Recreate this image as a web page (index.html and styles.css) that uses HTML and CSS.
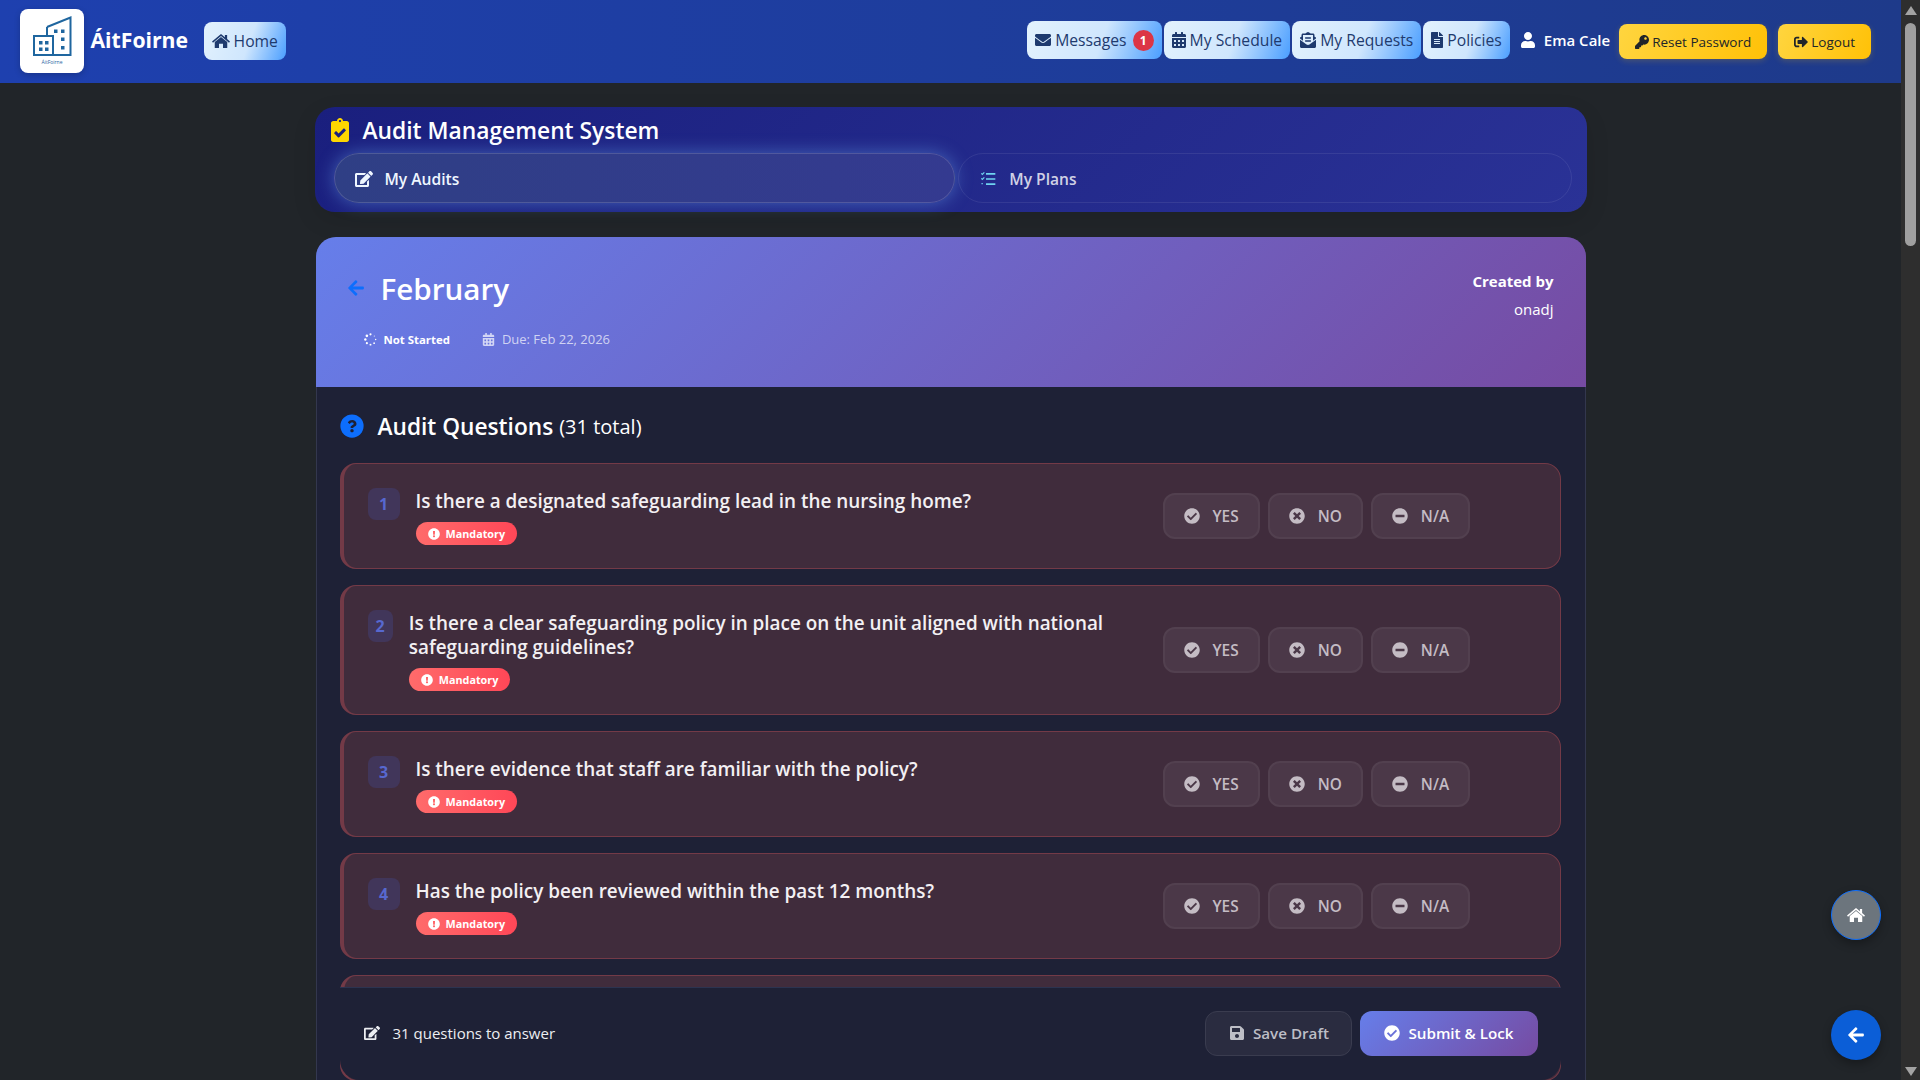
FILE: index.html
```html
<!DOCTYPE html>
<html lang="en">
<head>
    <meta charset="UTF-8">
    <meta name="viewport" content="width=device-width, initial-scale=1.0">
    <title>Audit Management System</title>
    <link rel="stylesheet" href="styles.css">
</head>
<body>

    <!-- Icon sprites -->
    <svg class="icon-defs" xmlns="http://www.w3.org/2000/svg">
        <symbol id="i-home" viewBox="0 0 576 512"><path d="M288 32L412 134V60h72v134l92 76-32 38L288 96 32 308 0 270zM288 124l200 166v178c0 7-5 12-12 12H352V340H224v140H100c-7 0-12-5-12-12V290z"/></symbol>
        <symbol id="i-envelope" viewBox="0 0 512 512"><path d="M502.3 190.8c3.9-3.1 9.7-.2 9.7 4.7V400c0 26.5-21.5 48-48 48H48c-26.5 0-48-21.5-48-48V195.6c0-5 5.7-7.8 9.7-4.7 22.4 17.4 52.1 39.5 154.1 113.6 21.1 15.4 56.7 47.8 92.2 47.6 35.7.3 72-32.8 92.3-47.6 102-74.1 131.6-96.3 154-113.7zM256 320c23.2.4 56.6-29.2 73.4-41.4 132.7-96.3 142.8-104.7 173.4-128.7 5.8-4.5 9.2-11.5 9.2-18.9v-19c0-26.5-21.5-48-48-48H48C21.5 64 0 85.5 0 112v19c0 7.4 3.4 14.3 9.2 18.9 30.6 23.9 40.7 32.4 173.4 128.7 16.8 12.2 50.2 41.8 73.4 41.4z"/></symbol>
        <symbol id="i-calendar" viewBox="0 0 448 512"><path d="M0 464c0 26.5 21.5 48 48 48h352c26.5 0 48-21.5 48-48V192H0v272zm320-196c0-6.6 5.4-12 12-12h40c6.6 0 12 5.4 12 12v40c0 6.6-5.4 12-12 12h-40c-6.6 0-12-5.4-12-12v-40zm0 128c0-6.6 5.4-12 12-12h40c6.6 0 12 5.4 12 12v40c0 6.6-5.4 12-12 12h-40c-6.6 0-12-5.4-12-12v-40zM192 268c0-6.6 5.4-12 12-12h40c6.6 0 12 5.4 12 12v40c0 6.6-5.4 12-12 12h-40c-6.6 0-12-5.4-12-12v-40zm0 128c0-6.6 5.4-12 12-12h40c6.6 0 12 5.4 12 12v40c0 6.6-5.4 12-12 12h-40c-6.6 0-12-5.4-12-12v-40zM64 268c0-6.6 5.4-12 12-12h40c6.6 0 12 5.4 12 12v40c0 6.6-5.4 12-12 12H76c-6.6 0-12-5.4-12-12v-40zm0 128c0-6.6 5.4-12 12-12h40c6.6 0 12 5.4 12 12v40c0 6.6-5.4 12-12 12H76c-6.6 0-12-5.4-12-12v-40zM400 64h-48V16c0-8.8-7.2-16-16-16h-32c-8.8 0-16 7.2-16 16v48H160V16c0-8.8-7.2-16-16-16h-32c-8.8 0-16 7.2-16 16v48H48C21.5 64 0 85.5 0 112v48h448v-48c0-26.5-21.5-48-48-48z"/></symbol>
        <symbol id="i-envelope-text" viewBox="0 0 512 512"><path d="M176 216h160c8.8 0 16-7.2 16-16v-16c0-8.800-7.200-16-16-16H176c-8.800 0-16 7.200-16 16v16c0 8.800 7.200 16 16 16zm-16 80c0 8.800 7.200 16 16 16h160c8.800 0 16-7.200 16-16v-16c0-8.800-7.200-16-16-16H176c-8.800 0-16 7.200-16 16v16zm96 121c-16.400 0-32.900-5.100-46.900-15.200L0 250v214c0 26.500 21.500 48 48 48h416c26.500 0 48-21.500 48-48V250L302.900 401.800c-14 10.100-30.500 15.200-46.900 15.200zm237.600-254.200c-8.900-6.900-17.300-13.400-29.600-22.700V96c0-26.500-21.500-48-48-48h-77.600c-3-2.200-5.900-4.300-9-6.600C312.600 29.200 279.200-.3 256 0c-23.200-.3-56.600 29.200-73.400 41.400-3.100 2.300-6 4.400-9 6.600H96c-26.500 0-48 21.500-48 48v44.100c-12.300 9.300-20.700 15.800-29.600 22.700A48 48 0 0 0 0 200.700v10.600l96 69.300V96h320v184.600l96-69.300v-10.600c0-14.800-6.800-28.800-18.400-37.900z"/></symbol>
        <symbol id="i-file" viewBox="0 0 384 512"><path d="M224 136V0H24C10.700 0 0 10.700 0 24v464c0 13.300 10.700 24 24 24h336c13.300 0 24-10.700 24-24V160H248c-13.200 0-24-10.800-24-24zm64 236c0 6.600-5.400 12-12 12H108c-6.600 0-12-5.400-12-12v-8c0-6.600 5.400-12 12-12h168c6.600 0 12 5.400 12 12v8zm0-64c0 6.600-5.400 12-12 12H108c-6.600 0-12-5.400-12-12v-8c0-6.600 5.400-12 12-12h168c6.600 0 12 5.400 12 12v8zm0-72v8c0 6.600-5.400 12-12 12H108c-6.600 0-12-5.400-12-12v-8c0-6.600 5.400-12 12-12h168c6.600 0 12 5.400 12 12zm96-114.100v6.100H256V0h6.100c6.400 0 12.500 2.500 17 7l97.900 98c4.500 4.500 7 10.600 7 16.900z"/></symbol>
        <symbol id="i-user" viewBox="0 0 448 512"><path d="M224 256c70.700 0 128-57.300 128-128S294.700 0 224 0 96 57.300 96 128s57.300 128 128 128zm89.600 32h-16.700c-22.200 10.200-46.900 16-72.900 16s-50.600-5.800-72.900-16h-16.700C60.200 288 0 348.200 0 422.400V464c0 26.500 21.500 48 48 48h352c26.500 0 48-21.500 48-48v-41.600c0-74.200-60.200-134.400-134.400-134.400z"/></symbol>
        <symbol id="i-key" viewBox="0 0 512 512"><path d="M512 176.001C512 273.203 433.202 352 336 352c-11.220 0-22.190-1.062-32.827-3.069l-24.012 27.014A23.999 23.999 0 0 1 261.223 384H224v40c0 13.255-10.745 24-24 24h-40v40c0 13.255-10.745 24-24 24H24c-13.255 0-24-10.745-24-24v-78.059c0-6.365 2.529-12.470 7.029-16.971l161.802-161.802C163.108 213.814 160 195.271 160 176 160 78.798 238.797.001 335.999 0 433.488-.001 512 78.511 512 176.001zM336 128c0 26.510 21.490 48 48 48s48-21.490 48-48-21.490-48-48-48-48 21.490-48 48z"/></symbol>
        <symbol id="i-logout" viewBox="0 0 512 512"><path d="M497 273L329 441c-15 15-41 4.500-41-17v-96H152c-13.300 0-24-10.700-24-24v-96c0-13.300 10.700-24 24-24h136V88c0-21.400 25.900-32 41-17l168 168c9.300 9.400 9.300 24.600 0 34zM192 436v-40c0-6.600-5.400-12-12-12H96c-17.700 0-32-14.300-32-32V160c0-17.700 14.300-32 32-32h84c6.600 0 12-5.400 12-12V76c0-6.600-5.400-12-12-12H96c-53 0-96 43-96 96v192c0 53 43 96 96 96h84c6.600 0 12-5.400 12-12z"/></symbol>
        <symbol id="i-edit" viewBox="0 0 576 512"><path d="M402.600 83.200l90.200 90.200c3.800 3.800 3.800 10 0 13.800L274.400 405.600l-92.800 10.300c-12.400 1.400-22.900-9.100-21.500-21.500l10.300-92.800L388.800 83.200c3.800-3.800 10-3.800 13.800 0zm162-22.900l-48.800-48.800c-15.200-15.200-39.900-15.200-55.200 0l-35.400 35.400c-3.800 3.800-3.800 10 0 13.800l90.200 90.200c3.800 3.800 10 3.800 13.800 0l35.400-35.400c15.200-15.300 15.200-40 0-55.200zM384 346.200V448H64V128h229.800c3.200 0 6.200-1.300 8.500-3.500l40-40c7.600-7.600 2.200-20.500-8.500-20.500H48C21.500 64 0 85.500 0 112v352c0 26.500 21.500 48 48 48h352c26.500 0 48-21.500 48-48V306.200c0-10.700-12.900-16-20.500-8.500l-40 40c-2.200 2.300-3.500 5.300-3.500 8.500z"/></symbol>
        <symbol id="i-save" viewBox="0 0 448 512"><path d="M433.941 129.941l-83.882-83.882A48 48 0 0 0 316.118 32H48C21.490 32 0 53.490 0 80v352c0 26.510 21.490 48 48 48h352c26.510 0 48-21.490 48-48V163.882a48 48 0 0 0-14.059-33.941zM224 416c-35.346 0-64-28.654-64-64 0-35.346 28.654-64 64-64s64 28.654 64 64c0 35.346-28.654 64-64 64zm96-304.520V212c0 6.627-5.373 12-12 12H76c-6.627 0-12-5.373-12-12V108c0-6.627 5.373-12 12-12h228.520c3.183 0 6.235 1.264 8.485 3.515l3.480 3.480A11.996 11.996 0 0 1 320 111.480z"/></symbol>
        <symbol id="i-check" viewBox="0 0 512 512"><path d="M504 256c0 136.967-111.033 248-248 248S8 392.967 8 256 119.033 8 256 8s248 111.033 248 248zM227.314 387.314l184-184c6.248-6.248 6.248-16.379 0-22.627l-22.627-22.627c-6.248-6.249-16.379-6.249-22.628 0L216 308.118l-70.059-70.059c-6.248-6.248-16.379-6.248-22.628 0l-22.627 22.627c-6.248 6.248-6.248 16.379 0 22.627l104 104c6.249 6.249 16.379 6.249 22.628.001z"/></symbol>
        <symbol id="i-times" viewBox="0 0 512 512"><path d="M256 8C119 8 8 119 8 256s111 248 248 248 248-111 248-248S393 8 256 8zm121.600 313.100c4.700 4.700 4.700 12.300 0 17L338 377.600c-4.700 4.700-12.300 4.700-17 0L256 312l-65.100 65.600c-4.700 4.700-12.300 4.700-17 0L134.400 338c-4.700-4.700-4.700-12.300 0-17l65.600-65-65.600-65.100c-4.700-4.700-4.700-12.300 0-17l39.600-39.600c4.700-4.700 12.300-4.700 17 0l65 65.700 65.100-65.600c4.700-4.700 12.300-4.700 17 0l39.600 39.600c4.700 4.700 4.700 12.300 0 17L312 256l65.600 65.100z"/></symbol>
        <symbol id="i-minus" viewBox="0 0 512 512"><path d="M256 8C119 8 8 119 8 256s111 248 248 248 248-111 248-248S393 8 256 8zM124 296c-6.600 0-12-5.400-12-12v-56c0-6.600 5.400-12 12-12h264c6.600 0 12 5.400 12 12v56c0 6.600-5.400 12-12 12H124z"/></symbol>
        <symbol id="i-alert" viewBox="0 0 512 512"><path d="M504 256c0 136.997-111.043 248-248 248S8 392.997 8 256C8 119.083 119.043 8 256 8s248 111.083 248 248zm-248 50c-25.405 0-46 20.595-46 46s20.595 46 46 46 46-20.595 46-46-20.595-46-46-46zm-43.673-165.346l7.418 136c.347 6.364 5.609 11.346 11.982 11.346h48.546c6.373 0 11.635-4.982 11.982-11.346l7.418-136c.375-6.874-5.098-12.654-11.982-12.654h-63.383c-6.884 0-12.356 5.780-11.981 12.654z"/></symbol>
        <symbol id="i-question" viewBox="0 0 512 512"><circle cx="256" cy="256" r="248"/><path transform="translate(256 256) scale(.78) translate(-256 -256)" fill="#1e2136" d="M262.655 90c-54.497 0-89.255 22.957-116.549 63.758-3.536 5.286-2.353 12.415 2.715 16.258l34.699 26.310c5.205 3.947 12.621 3.008 16.665-2.122 17.864-22.658 30.113-35.797 57.303-35.797 20.429 0 45.698 13.148 45.698 32.958 0 14.976-12.363 22.667-32.534 33.976C247.128 238.528 216 254.941 216 296v4c0 6.627 5.373 12 12 12h56c6.627 0 12-5.373 12-12v-1.333c0-28.462 83.186-29.647 83.186-106.667 0-58.002-60.165-102-116.531-102zM256 338c-25.365 0-46 20.635-46 46 0 25.364 20.635 46 46 46s46-20.636 46-46c0-25.365-20.635-46-46-46z"/></symbol>
        <symbol id="i-arrow" viewBox="0 0 448 512"><path d="M257.500 445.100l-22.200 22.200c-9.400 9.400-24.600 9.400-33.900 0L7 273c-9.400-9.400-9.400-24.600 0-33.900L201.400 44.700c9.400-9.400 24.600-9.400 33.900 0l22.200 22.200c9.500 9.500 9.300 25-.4 34.300L136.600 216H424c13.300 0 24 10.700 24 24v32c0 13.300-10.700 24-24 24H136.600l120.500 114.800c9.800 9.300 10 24.800.4 34.300z"/></symbol>
        <symbol id="i-clipboard" viewBox="0 0 384 512"><path d="M336 64h-80c0-35.300-28.700-64-64-64s-64 28.700-64 64H48C21.500 64 0 85.500 0 112v352c0 26.500 21.500 48 48 48h288c26.500 0 48-21.500 48-48V112c0-26.500-21.500-48-48-48zM192 40c13.300 0 24 10.700 24 24s-10.700 24-24 24-24-10.700-24-24 10.700-24 24-24zm121.200 231.800l-143 141.800c-4.700 4.700-12.300 4.600-17-.1l-82.600-83.300c-4.700-4.700-4.600-12.300.1-17L99.100 285c4.700-4.700 12.300-4.600 17 .1l46 46.400 106-105.100c4.700-4.700 12.300-4.600 17 .1l28.200 28.400c4.700 4.800 4.600 12.300-.1 16.900z"/></symbol>
        <symbol id="i-tasks" viewBox="0 0 24 24"><path d="M2 3.500l1.500 1.500L6.500 2M2 11l1.500 1.500 3-3M2.200 19h2" fill="none" stroke="currentColor" stroke-width="1.800"/><path d="M9 3h14v2.500H9zM9 10.700h14v2.500H9zM9 18.400h14v2.500H9z"/></symbol>
        <symbol id="i-spinner" viewBox="0 0 24 24"><circle cx="12" cy="2.500" r="2"/><circle cx="19" cy="5.500" r="1"/><circle cx="21.500" cy="12" r="1.300"/><circle cx="18.700" cy="18.700" r="1.600"/><circle cx="12" cy="21.500" r="1.800"/><circle cx="5.300" cy="18.700" r="2"/><circle cx="2.500" cy="12" r="2.200"/><circle cx="5.300" cy="5.300" r="2.400"/></symbol>
    </svg>

    <div class="page">
        <nav class="navbar">
            <div class="brand">
                <div class="brand-logo">
                    <svg class="brand-mark" viewBox="0 0 40 40">
                        <path d="M14 11L37.500 1.500V39H20" fill="none" stroke="#1f669f" stroke-width="2"/>
                        <rect x="1" y="20" width="19" height="19" fill="#fff" stroke="#1f669f" stroke-width="2"/>
                        <path d="M14 20v-9" stroke="#1f669f" stroke-width="2"/>
                        <path d="M6 25h3.500v3.500H6zM12 25h3.500v3.500H12zM6 31.500h3.500V35H6zM12 31.500h3.500V35H12zM21 13.500h3.500V17H21zM28 13.500h3.500V17H28zM28 21.500h3.500V25H28zM28 30h3.500v3.500H28z" fill="#1f669f"/>
                    </svg>
                    <span class="brand-tiny">ÁitFoirne</span>
                </div>
                <span class="brand-name">ÁitFoirne</span>
                <a class="nav-btn nav-home" href="#"><svg class="icon"><use href="#i-home"/></svg>Home</a>
            </div>
            <div class="nav-right">
                <a class="nav-btn" href="#"><svg class="icon"><use href="#i-envelope"/></svg>Messages<span class="msg-badge">1</span></a>
                <a class="nav-btn" href="#"><svg class="icon icon-cal"><use href="#i-calendar"/></svg>My Schedule</a>
                <a class="nav-btn" href="#"><svg class="icon"><use href="#i-envelope-text"/></svg>My Requests</a>
                <a class="nav-btn" href="#"><svg class="icon icon-file"><use href="#i-file"/></svg>Policies</a>
                <span class="nav-user"><svg class="icon"><use href="#i-user"/></svg>Ema Cale</span>
                <a class="warn-btn warn-reset" href="#"><svg class="icon"><use href="#i-key"/></svg>Reset Password</a>
                <a class="warn-btn" href="#"><svg class="icon"><use href="#i-logout"/></svg>Logout</a>
            </div>
        </nav>

        <main class="container">
            <section class="audit-top">
                <h1 class="audit-title"><svg class="icon"><use href="#i-clipboard"/></svg>Audit Management System</h1>
                <div class="tabs">
                    <a class="tab active" href="#"><svg class="icon"><use href="#i-edit"/></svg>My Audits</a>
                    <a class="tab" href="#"><svg class="icon tab-tasks"><use href="#i-tasks"/></svg>My Plans</a>
                </div>
            </section>

            <section class="audit-card">
                <header class="hero">
                    <div>
                        <div class="hero-title">
                            <svg class="icon hero-back"><use href="#i-arrow"/></svg>
                            <h2>February</h2>
                        </div>
                        <div class="hero-meta">
                            <span class="status"><svg class="icon"><use href="#i-spinner"/></svg>Not Started</span>
                            <span class="due"><svg class="icon"><use href="#i-calendar"/></svg>Due: Feb 22, 2026</span>
                        </div>
                    </div>
                    <div class="created">
                        <strong>Created by</strong>
                        <span>onadj</span>
                    </div>
                </header>

                <div class="questions">
                    <h3 class="questions-title"><svg class="icon"><use href="#i-question"/></svg>Audit Questions <small>(31 total)</small></h3>

                    <div class="q-card">
                        <div class="q-main">
                            <div class="q-num">1</div>
                            <div class="q-text">
                                <p>Is there a designated safeguarding lead in the nursing home?</p>
                                <span class="mandatory"><svg class="icon"><use href="#i-alert"/></svg>Mandatory</span>
                            </div>
                        </div>
                        <div class="q-answers">
                            <button class="ans"><svg class="icon"><use href="#i-check"/></svg>YES</button>
                            <button class="ans"><svg class="icon"><use href="#i-times"/></svg>NO</button>
                            <button class="ans"><svg class="icon"><use href="#i-minus"/></svg>N/A</button>
                        </div>
                    </div>

                    <div class="q-card">
                        <div class="q-main">
                            <div class="q-num">2</div>
                            <div class="q-text">
                                <p>Is there a clear safeguarding policy in place on the unit aligned with national safeguarding guidelines?</p>
                                <span class="mandatory"><svg class="icon"><use href="#i-alert"/></svg>Mandatory</span>
                            </div>
                        </div>
                        <div class="q-answers">
                            <button class="ans"><svg class="icon"><use href="#i-check"/></svg>YES</button>
                            <button class="ans"><svg class="icon"><use href="#i-times"/></svg>NO</button>
                            <button class="ans"><svg class="icon"><use href="#i-minus"/></svg>N/A</button>
                        </div>
                    </div>

                    <div class="q-card">
                        <div class="q-main">
                            <div class="q-num">3</div>
                            <div class="q-text">
                                <p>Is there evidence that staff are familiar with the policy?</p>
                                <span class="mandatory"><svg class="icon"><use href="#i-alert"/></svg>Mandatory</span>
                            </div>
                        </div>
                        <div class="q-answers">
                            <button class="ans"><svg class="icon"><use href="#i-check"/></svg>YES</button>
                            <button class="ans"><svg class="icon"><use href="#i-times"/></svg>NO</button>
                            <button class="ans"><svg class="icon"><use href="#i-minus"/></svg>N/A</button>
                        </div>
                    </div>

                    <div class="q-card">
                        <div class="q-main">
                            <div class="q-num">4</div>
                            <div class="q-text">
                                <p>Has the policy been reviewed within the past 12 months?</p>
                                <span class="mandatory"><svg class="icon"><use href="#i-alert"/></svg>Mandatory</span>
                            </div>
                        </div>
                        <div class="q-answers">
                            <button class="ans"><svg class="icon"><use href="#i-check"/></svg>YES</button>
                            <button class="ans"><svg class="icon"><use href="#i-times"/></svg>NO</button>
                            <button class="ans"><svg class="icon"><use href="#i-minus"/></svg>N/A</button>
                        </div>
                    </div>

                    <!-- Only the edge of this one shows behind the action bar -->
                    <div class="q-card q-card-peek"></div>

                    <div class="action-bar">
                        <span class="action-note"><svg class="icon"><use href="#i-edit"/></svg>31 questions to answer</span>
                        <div class="action-btns">
                            <button class="btn-save"><svg class="icon"><use href="#i-save"/></svg>Save Draft</button>
                            <button class="btn-submit"><svg class="icon"><use href="#i-check"/></svg>Submit &amp; Lock</button>
                        </div>
                    </div>
                </div>
            </section>
        </main>
    </div>

    <div class="scrollbar">
        <span class="scroll-arrow"></span>
        <span class="scroll-thumb"></span>
        <span class="scroll-arrow down"></span>
    </div>

    <a class="float-btn float-home" href="#"><svg class="icon"><use href="#i-home"/></svg></a>
    <a class="float-btn float-back" href="#"><svg class="icon"><use href="#i-arrow"/></svg></a>

</body>
</html>
```

FILE: styles.css
```css
* {
    box-sizing: border-box;
}
body {
    font-family: "Open Sans", "Noto Sans", sans-serif;
    background-color: #212529;
    color: #fff;
    margin: 0;
    height: 100vh;
    overflow: hidden;
    display: flex;
}
a {
    text-decoration: none;
    color: inherit;
}
.icon-defs {
    display: none;
}
.icon {
    width: 16px;
    height: 16px;
    fill: currentColor;
    flex: none;
}
.page {
    flex: 1;
    min-width: 0;
    height: 100vh;
    overflow: hidden;
}

/* Navbar */
.navbar {
    height: 83px;
    background: linear-gradient(90deg, #1e40af, #1e3a8a);
    display: flex;
    justify-content: space-between;
    align-items: center;
    padding: 0 30px 3px 20px;
}
.brand {
    display: flex;
    align-items: center;
}
.brand-logo {
    width: 64px;
    height: 64px;
    margin-top: 2px;
    background-color: #fff;
    border-radius: 8px;
    box-shadow: 0 2px 6px rgba(0, 0, 0, 0.2);
    display: flex;
    flex-direction: column;
    align-items: center;
    padding-top: 7px;
}
.brand-mark {
    width: 40px;
    height: 40px;
    margin-left: 2px;
}
.brand-tiny {
    font-size: 5px;
    color: #1f669f;
    margin-top: 3px;
}
.brand-name {
    font-size: 21.2px;
    font-weight: 700;
    margin: 0 15.5px 2px 6.5px;
}
.nav-btn {
    height: 38px;
    display: flex;
    align-items: center;
    gap: 4px;
    padding: 0 8px;
    border-radius: 8px;
    font-size: 15.7px;
    color: #1e3a6e;
    background: linear-gradient(110deg, #e3f2fd 0%, #cfe6fd 55%, #4a9eff 100%);
}
.nav-home {
    margin-top: 2px;
}
.nav-home .icon {
    width: 18px;
}
.nav-btn .icon-cal {
    width: 14px;
}
.nav-btn .icon-file {
    width: 12px;
}
.nav-right {
    display: flex;
    align-items: center;
    gap: 2px;
}
.msg-badge {
    background-color: #dc3545;
    color: #fff;
    font-size: 12px;
    font-weight: 700;
    width: 21px;
    height: 21px;
    border-radius: 50%;
    display: flex;
    align-items: center;
    justify-content: center;
    margin-left: 2px;
}
.nav-user {
    display: flex;
    align-items: center;
    font-size: 15px;
    font-weight: 600;
    padding: 0 7px 0 9px;
    gap: 9px;
}
.nav-user .icon {
    width: 14px;
}
.warn-btn {
    height: 35px;
    margin-top: 3px;
    display: flex;
    align-items: center;
    gap: 3px;
    padding: 0 16px;
    border-radius: 8px;
    font-size: 13.5px;
    color: #212529;
    background: linear-gradient(110deg, #ffd53f, #ffc107);
    box-shadow: 0 2px 6px rgba(255, 193, 7, 0.2);
}
.warn-btn .icon {
    width: 14px;
    height: 14px;
}
.warn-reset {
    margin-right: 9px;
}

/* Main column */
.container {
    width: 1272px;
    margin: 24px auto 0;
}
.audit-top {
    height: 105px;
    padding: 0 15px 9px 16px;
    border-radius: 20px;
    background: linear-gradient(135deg, #1a1f7e, #2a3296);
    box-shadow: 0 8px 24px rgba(0, 0, 0, 0.1);
}
.audit-title {
    height: 46px;
    margin: 0;
    display: flex;
    align-items: center;
    gap: 14px;
    font-size: 22.8px;
    font-weight: 600;
}
.audit-title .icon {
    width: 18px;
    height: 24px;
    color: #ffd600;
}
.tabs {
    display: flex;
    gap: 3px;
    margin-left: 3px;
}
.tab {
    flex: 1;
    height: 50px;
    display: flex;
    align-items: center;
    gap: 12px;
    padding: 1px 20px 0;
    border-radius: 25px;
    border: 1px solid rgba(255, 255, 255, 0.08);
    font-size: 15.6px;
    font-weight: 600;
    color: rgba(255, 255, 255, 0.8);
}
.tab .icon {
    width: 18px;
}
.tab-tasks {
    color: #6fd3f0;
}
.tab.active {
    flex: 1.015;
    color: #eef6ff;
    background: linear-gradient(90deg, #2f3f85, #343a90);
    border-color: rgba(255, 255, 255, 0.15);
    box-shadow: 0 0 18px rgba(120, 190, 255, 0.4);
}

/* Audit card */
.audit-card {
    margin-top: 25px;
    margin-left: 1px;
    width: 1270px;
    background-color: #1e2136;
    border: 1px solid #33374e;
    border-radius: 20px 20px 0 0;
}
.hero {
    height: 150px;
    margin: -1px -1px 0;
    padding: 27px 32px 0 31px;
    display: flex;
    justify-content: space-between;
    border-radius: 20px 20px 0 0;
    background: linear-gradient(135deg, #667eea, #764ba2);
}
.hero-title {
    display: flex;
    align-items: center;
    gap: 16px;
    height: 48px;
}
.hero-title h2 {
    margin: 0;
    font-size: 29.6px;
    font-weight: 600;
}
.hero-back {
    width: 18px;
    height: 18px;
    color: #0d6efd;
}
.hero-meta {
    display: flex;
    align-items: center;
    gap: 32px;
    margin: 18px 0 0 17px;
    font-size: 13px;
}
.hero-meta span {
    display: flex;
    align-items: center;
    gap: 7px;
}
.hero-meta .icon {
    width: 13px;
    height: 13px;
}
.status {
    font-size: 11.4px;
    font-weight: 700;
}
.due {
    color: rgba(255, 255, 255, 0.7);
}
.created {
    display: flex;
    flex-direction: column;
    align-items: flex-end;
    font-size: 15px;
    line-height: 28px;
    padding-top: 3px;
}
.questions {
    padding: 21px 24px 0 23px;
}
.questions-title {
    margin: 0 0 19px;
    height: 36px;
    display: flex;
    align-items: center;
    gap: 14px;
    font-size: 22.7px;
    font-weight: 600;
}
.questions-title small {
    font-size: 20px;
    font-weight: 500;
    margin-left: -8px;
}
.questions-title .icon {
    width: 24px;
    height: 24px;
    color: #0d6efd;
}

/* Question rows */
.q-card {
    display: flex;
    align-items: center;
    gap: 24px;
    padding: 24px;
    margin-bottom: 16px;
    background-color: #402c3c;
    border: 1px solid #733a47;
    border-left-width: 4px;
    border-radius: 16px;
}
.q-card-peek {
    height: 106px;
}
.q-main {
    flex: 1;
    min-width: 0;
    display: flex;
    gap: 16px;
}
.q-num {
    width: 32px;
    height: 32px;
    border-radius: 8px;
    background-color: #41365a;
    color: #5768cf;
    font-size: 16px;
    font-weight: 700;
    display: flex;
    align-items: center;
    justify-content: center;
}
.q-text {
    padding-top: 1px;
    margin-bottom: -1px;
}
.q-text p {
    margin: 0 0 9px;
    font-size: 18.9px;
    line-height: 24px;
    font-weight: 600;
    color: #f3f0f3;
}
.mandatory {
    display: inline-flex;
    align-items: center;
    gap: 6px;
    height: 23px;
    padding: 0 12px;
    border-radius: 12px;
    font-size: 10.8px;
    font-weight: 700;
    background: linear-gradient(90deg, #ff6b6b, #ff4757);
    vertical-align: top;
}
.mandatory .icon {
    width: 12px;
    height: 12px;
}
.q-answers {
    flex: none;
    width: 373px;
    display: flex;
    gap: 8px;
}
.ans {
    height: 46px;
    display: flex;
    align-items: center;
    gap: 13px;
    padding: 0 19px;
    border-radius: 12px;
    border: 2px solid #52404f;
    background-color: #4b3848;
    color: #c4bcc4;
    font-family: inherit;
    font-size: 15.4px;
    font-weight: 600;
}

/* Sticky action bar */
.action-bar {
    position: sticky;
    bottom: 0;
    height: 93px;
    padding: 0 23px 2px 24px;
    display: flex;
    align-items: center;
    justify-content: space-between;
    background-color: #1e2136;
    border-top: 1px solid #2c3350;
    border-radius: 0 0 20px 20px;
}
.action-note {
    display: flex;
    align-items: center;
    gap: 13px;
    font-size: 15px;
    color: #eceef2;
}
.action-btns {
    display: flex;
    gap: 8px;
}
.btn-save,
.btn-submit {
    height: 45px;
    display: flex;
    align-items: center;
    gap: 8px;
    padding: 0 24px;
    border-radius: 12px;
    font-family: inherit;
    font-size: 15.2px;
    font-weight: 600;
}
.btn-save {
    padding: 0 22.5px;
    background-color: #2a2c40;
    border: 1px solid #3a3c4f;
    color: #bdbec6;
}
.btn-submit {
    background: linear-gradient(135deg, #667eea, #764ba2);
    border: none;
    color: #fff;
}

/* Fake page scrollbar */
.scrollbar {
    flex: none;
    width: 19px;
    height: 100vh;
    background-color: #2e2e2e;
    display: flex;
    flex-direction: column;
    align-items: center;
    padding: 6px 0 4px;
}
.scroll-arrow {
    width: 0;
    height: 0;
    border-left: 6px solid transparent;
    border-right: 6px solid transparent;
    border-bottom: 9px solid #a3a3a3;
}
.scroll-arrow.down {
    border-bottom: none;
    border-top: 9px solid #a3a3a3;
    margin-top: auto;
}
.scroll-thumb {
    width: 11px;
    height: 223px;
    margin-top: 8px;
    border-radius: 6px;
    background-color: #9f9f9f;
}

/* Floating buttons */
.float-btn {
    position: fixed;
    right: 39px;
    width: 50px;
    height: 50px;
    border-radius: 50%;
    display: flex;
    align-items: center;
    justify-content: center;
    color: #fff;
    box-shadow: 0 4px 10px rgba(0, 0, 0, 0.3);
}
.float-btn .icon {
    width: 18px;
    height: 18px;
}
.float-home {
    top: 890px;
    background-color: #6c757d;
    border: 1px solid #0d6efd;
}
.float-back {
    top: 1010px;
    background-color: #0b5ed7;
}
```
